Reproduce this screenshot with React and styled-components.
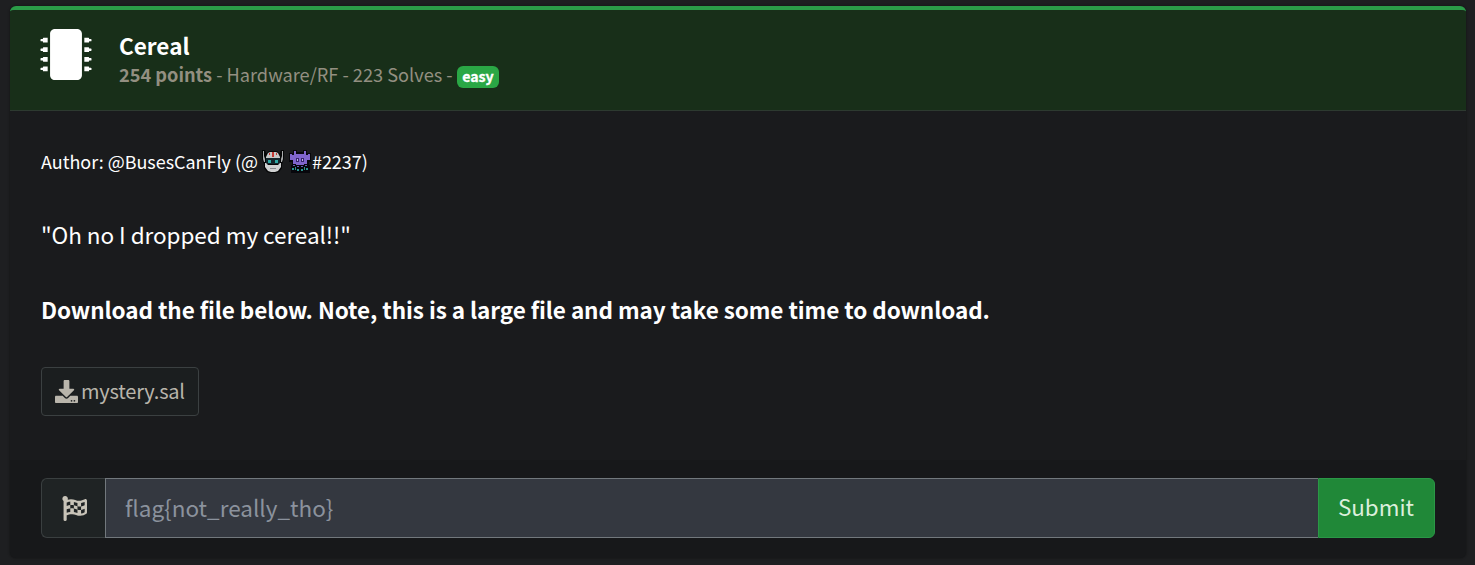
import React from 'react';
import styled, { createGlobalStyle } from 'styled-components';
import { FaMicrochip, FaDownload, FaFlagCheckered } from 'react-icons/fa';

const GlobalStyle = createGlobalStyle`
  *, *::before, *::after { box-sizing: border-box; }
  body {
    margin: 0;
    background: #1e1f21;
    color: #fff;
    font-family: "Noto Sans CJK JP", "Noto Sans", sans-serif;
  }
`;

const Page = styled.main`
  height: 565px;
  padding: 6px 9px 7px 10px;
  overflow: hidden;
`;

const Card = styled.article`
  display: flex;
  flex-direction: column;
  height: 552px;
  border-top: 4px solid #2b9c48;
  border-radius: 6px;
  background: #1a1b1d;
  box-shadow: 0 0 2px 1px rgba(0, 0, 0, 0.22);
  overflow: hidden;
`;

const Header = styled.header`
  display: flex;
  align-items: flex-start;
  height: 101px;
  padding: 19px 30px 0;
  background: #182f19;
  border-bottom: 1px solid #2d3a30;
`;

const ChipIcon = styled(FaMicrochip)`
  flex: none;
  width: 52px;
  height: 51px;
  margin-right: 27px;
`;

const Heading = styled.div`
  display: flex;
  flex-direction: column;
  padding-top: 2px;
`;

const Title = styled.h1`
  margin: 0;
  font-size: 22.5px;
  line-height: 29px;
  font-weight: 700;
`;

const Meta = styled.div`
  display: flex;
  align-items: center;
  gap: 4px;
  font-size: 18.2px;
  line-height: 28px;
  color: #938f81;
  white-space: pre;
`;

const Badge = styled.span`
  height: 22px;
  margin-top: 6px;
  padding: 0 5.5px;
  border-radius: 6px;
  background: #2aa745;
  color: #fff;
  font-size: 14.2px;
  line-height: 21px;
  font-weight: 700;
  -webkit-text-stroke: 0.3px #fff;
`;

const Body = styled.section`
  display: flex;
  flex-direction: column;
  align-items: flex-start;
  height: 349px;
  padding: 35px 31px 0;
`;

const Author = styled.p`
  display: flex;
  align-items: center;
  height: 30px;
  margin: 0;
  font-size: 17.95px;
  line-height: 30px;
  white-space: pre;
`;

const PixelArt = styled.svg`
  width: 22px;
  height: 23px;
  margin: 0 1px 0 4px;
`;

const Quote = styled.p`
  margin: 39px 0 0;
  font-size: 22.5px;
  line-height: 38px;
  letter-spacing: -0.05px;
`;

const Notice = styled.p`
  margin: 37px 0 0;
  font-size: 22.5px;
  line-height: 38px;
  font-weight: 700;
  letter-spacing: -0.07px;
`;

const FileButton = styled.a`
  display: flex;
  align-items: center;
  gap: 3px;
  height: 49px;
  margin-top: 39px;
  padding: 0 13px;
  border: 1px solid #3b4041;
  border-radius: 4px;
  background: #1b1e1f;
  color: #b9b5ab;
  font-size: 20px;
  letter-spacing: -0.2px;
  line-height: 45px;
  span { padding-bottom: 2px; }
  svg { width: 23px; height: 23px; }
`;

const Footer = styled.footer`
  display: flex;
  flex: 1;
  padding: 18px 31px 20px;
  background: #17181a;
`;

const FlagAddon = styled.span`
  display: flex;
  align-items: center;
  justify-content: center;
  width: 64px;
  height: 60px;
  border: 1px solid #3a3f40;
  border-right: 0;
  border-radius: 6px 0 0 6px;
  background: #1f2324;
  color: #c8c3b8;
  svg { width: 25px; height: 25px; margin-left: 2px; }
`;

const FlagInput = styled.input`
  flex: 1;
  min-width: 0;
  height: 60px;
  padding: 0 19px 2px;
  border: 1px solid #72787d;
  border-right: 0;
  border-radius: 0;
  outline: 0;
  background: #343840;
  color: #fff;
  font: 400 22.5px/56px "Noto Sans CJK JP", "Noto Sans", sans-serif;
  &::placeholder { color: #8b929d; opacity: 1; }
`;

const SubmitButton = styled.button`
  width: 117px;
  height: 60px;
  padding: 0 1px 4px 0;
  border: 1px solid #2b9747;
  border-radius: 0 6px 6px 0;
  background: #208838;
  color: #dcefdc;
  font: 400 22.4px/54px "Noto Sans CJK JP", "Noto Sans", sans-serif;
`;

const Robot = () => (
  <PixelArt viewBox="0 0 22 23" aria-label="robot">
    <path d="M0 0h3l1 3h1l2-2h8l2 2h1l1-3h3v9l-2 5v4l-3 4-3 1H8l-3-1-3-4v-4L0 9z" fill="#050607" />
    <path d="M1 1h1v5l1 3v3H2L1 9zM20 1h1v8l-1 3h-1V9l1-3z" fill="#a9abad" />
    <path d="M6 3l2-1h6l2 1 2 4v1H4V7z" fill="#c6c7c8" />
    <path d="M10 2h2v5h-2zM7 3h1v2H7zM14 3h1v2h-1z" fill="#c43a34" />
    <path d="M4 8h14v6H4z" fill="#14262c" />
    <path d="M6 10h3v3H6zM13 10h3v3h-3z" fill="#2fa8a4" />
    <path d="M3 13h1l2 2h10l2-2h1v4l-3 4-3 1H9l-3-1-3-4z" fill="#d0d1d2" />
    <path d="M8 18h6v1H8z" fill="#8a8d90" />
  </PixelArt>
);

const Alien = () => (
  <PixelArt viewBox="0 0 22 23" aria-label="alien">
    <path d="M0 3h4V0h4v2h6V0h4v3h4v9h-2v3h1v8H2v-8h1v-3H0z" fill="#07070c" />
    <path d="M5 1h2v3h8V1h2v4h2V4h2v6h-3v4h-3v1H7v-1H4v-4H1V4h2v1h2z" fill="#8065cc" />
    <path d="M7 8h3v4H7zM12 8h3v4h-3z" fill="#38266b" />
    <path d="M8 9h1v2H8zM13 9h1v2h-1z" fill="#bcb0ed" />
    <path d="M4 15h2v1H4zM8 16h2v1H8zM12 16h2v1h-2zM16 15h2v1h-2z" fill="#6460b3" />
    <path d="M3 18h2v2H3zM6 17h1v3H6zM8 19h2v2H8zM12 19h2v2h-2zM15 17h1v3h-1zM17 18h2v2h-2z" fill="#2b948f" />
  </PixelArt>
);

export default function App() {
  return (
    <>
      <GlobalStyle />
      <Page>
        <Card>
          <Header>
            <ChipIcon />
            <Heading>
              <Title>Cereal</Title>
              <Meta>
                <span><b>254 points</b> - Hardware/RF - 223 Solves -</span>
                <Badge>easy</Badge>
              </Meta>
            </Heading>
          </Header>
          <Body>
            <Author>Author: @BusesCanFly (@<Robot /><Alien />#2237)</Author>
            <Quote>"Oh no I dropped my cereal!!"</Quote>
            <Notice>Download the file below. Note, this is a large file and may take some time to download.</Notice>
            <FileButton><FaDownload /><span>mystery.sal</span></FileButton>
          </Body>
          <Footer>
            <FlagAddon><FaFlagCheckered /></FlagAddon>
            <FlagInput placeholder="flag{not_really_tho}" />
            <SubmitButton>Submit</SubmitButton>
          </Footer>
        </Card>
      </Page>
    </>
  );
}
